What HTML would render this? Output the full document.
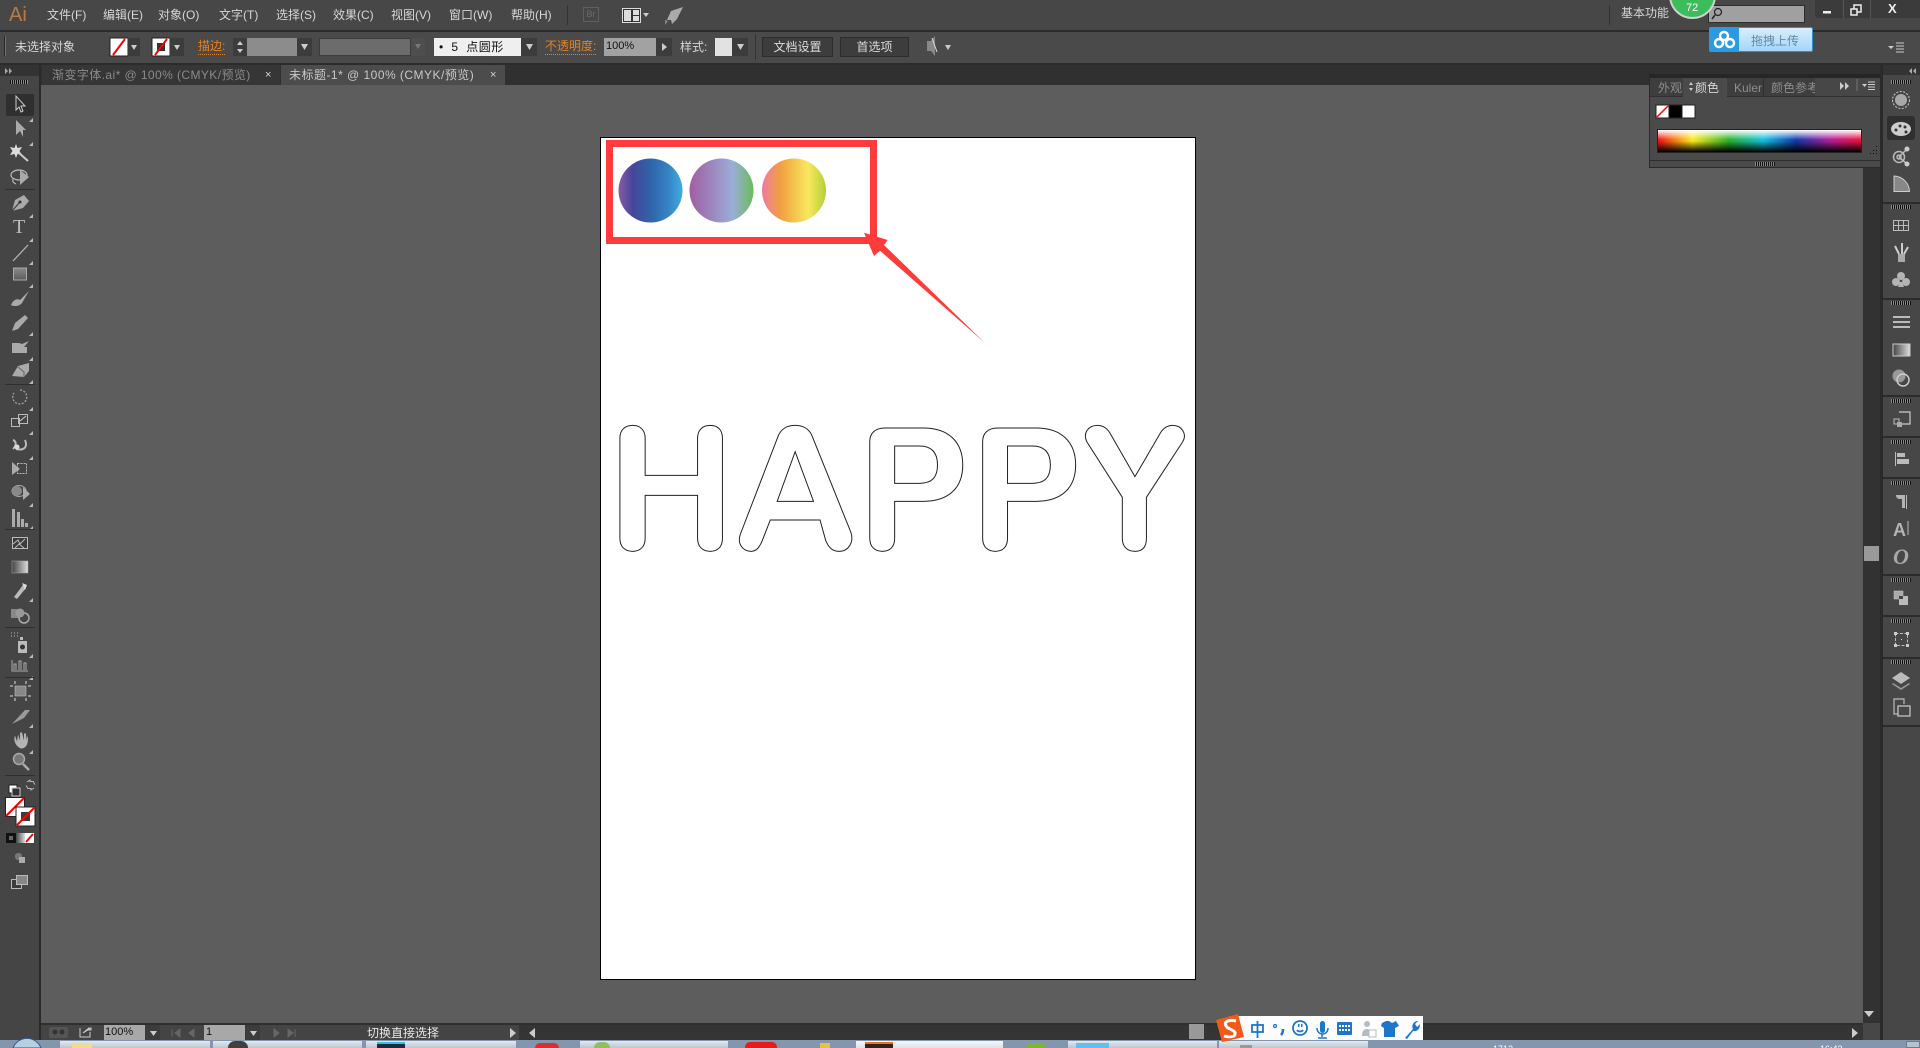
<!DOCTYPE html>
<html><head><meta charset="utf-8"><title>Ai</title>
<style>
html,body{margin:0;padding:0;background:#5d5d5d}
#p{position:relative;width:1920px;height:1048px;overflow:hidden;background:#5d5d5d;font:12px "Liberation Sans","WenQuanYi Zen Hei","Noto Sans CJK SC",sans-serif}
.b{position:absolute}
.t{position:absolute;white-space:nowrap;color:#d6d6d6;line-height:16px;font-size:12px}
.o{color:#e8821e;border-bottom:1px dotted #e8821e;line-height:15px}
svg{position:absolute;left:0;top:0}
</style></head><body><div id="p">
<!-- bars -->
<div class="b" style="left:0;top:0;width:1920px;height:30px;background:#474747"></div>
<div class="b" style="left:0;top:30px;width:1920px;height:2px;background:#2c2c2c"></div>
<div class="b" style="left:0;top:32px;width:1920px;height:31px;background:#4a4a4a"></div>
<div class="b" style="left:0;top:63px;width:1920px;height:2px;background:#2c2c2c"></div>
<div class="b" style="left:41px;top:65px;width:1842px;height:20px;background:#303030"></div>
<div class="b" style="left:0;top:65px;width:39px;height:975px;background:#454545"></div>
<div class="b" style="left:0;top:65px;width:39px;height:11px;background:#333"></div>
<div class="b" style="left:39px;top:65px;width:2px;height:975px;background:#2a2a2a"></div>
<div class="b" style="left:42px;top:65px;width:238px;height:20px;background:#363636"></div>
<div class="b" style="left:281px;top:65px;width:224px;height:20px;background:#4c4c4c"></div>
<!-- menu -->
<div class="t" style="left:9px;top:3px;font-size:20px;line-height:24px;color:#b87c44">Ai</div>
<div class="t" style="left:47px;top:7px">文件(F)</div>
<div class="t" style="left:103px;top:7px">编辑(E)</div>
<div class="t" style="left:158px;top:7px">对象(O)</div>
<div class="t" style="left:219px;top:7px">文字(T)</div>
<div class="t" style="left:276px;top:7px">选择(S)</div>
<div class="t" style="left:333px;top:7px">效果(C)</div>
<div class="t" style="left:391px;top:7px">视图(V)</div>
<div class="t" style="left:449px;top:7px">窗口(W)</div>
<div class="t" style="left:511px;top:7px">帮助(H)</div>
<div class="b" style="left:567px;top:5px;width:1px;height:20px;background:#333"></div>
<div class="b" style="left:583px;top:7px;width:14px;height:13px;border:1px solid #5f5f5f;color:#6b6b6b;font-size:9px;line-height:13px;text-align:center">Br</div>
<!-- control bar -->
<div class="t" style="left:15px;top:39px">未选择对象</div>
<div class="t o" style="left:198px;top:39px">描边:</div>
<div class="b" style="left:233px;top:38px;width:14px;height:18px;background:#3c3c3c"></div>
<div class="b" style="left:247px;top:38px;width:50px;height:18px;background:#8c8c8c"></div>
<div class="b" style="left:297px;top:38px;width:15px;height:18px;background:#3c3c3c"></div>
<div class="b" style="left:319px;top:38px;width:92px;height:18px;background:#6c6c6c;border:1px solid #3c3c3c;box-sizing:border-box"></div>
<div class="b" style="left:411px;top:38px;width:14px;height:18px;background:#4e4e4e"></div>
<div class="b" style="left:434px;top:38px;width:87px;height:18px;background:#efefef"></div>
<div class="t" style="left:439px;top:39px;color:#111;letter-spacing:.5px">•&nbsp;&nbsp;5&nbsp;&nbsp;点圆形</div>
<div class="b" style="left:521px;top:38px;width:16px;height:18px;background:#3c3c3c"></div>
<div class="t o" style="left:545px;top:39px">不透明度:</div>
<div class="b" style="left:604px;top:38px;width:52px;height:18px;background:#a2a2a2"></div>
<div class="t" style="left:606px;top:38px;color:#111;font-size:11px">100%</div>
<div class="b" style="left:656px;top:38px;width:16px;height:18px;background:#3c3c3c"></div>
<div class="t" style="left:680px;top:39px">样式:</div>
<div class="b" style="left:715px;top:38px;width:17px;height:18px;background:#e2e2e2"></div>
<div class="b" style="left:732px;top:38px;width:16px;height:18px;background:#3c3c3c"></div>
<div class="b" style="left:755px;top:34px;width:1px;height:26px;background:#333"></div>
<div class="b" style="left:762px;top:37px;width:71px;height:20px;background:#3d3d3d;border:1px solid #2c2c2c;box-sizing:border-box;color:#ddd;text-align:center;line-height:18px">文档设置</div>
<div class="b" style="left:840px;top:37px;width:69px;height:20px;background:#3d3d3d;border:1px solid #2c2c2c;box-sizing:border-box;color:#ddd;text-align:center;line-height:18px">首选项</div>
<!-- tabs -->
<div class="t" style="left:52px;top:67px;color:#8a8a8a;letter-spacing:.42px">渐变字体.ai* @ 100% (CMYK/预览)</div>
<div class="t" style="left:289px;top:67px;color:#c8c8c8;letter-spacing:.48px">未标题-1* @ 100% (CMYK/预览)</div>
<div class="t" style="left:265px;top:67px;font-size:11px">×</div>
<div class="t" style="left:490px;top:67px;font-size:11px">×</div>
<!-- top right -->
<div class="b" style="left:1609px;top:5px;width:1px;height:20px;background:#333"></div>
<div class="t" style="left:1621px;top:5px">基本功能</div>
<div class="b" style="left:1708px;top:5px;width:97px;height:18px;background:#a0a0a0;border:1px solid #2e2e2e;box-sizing:border-box"></div>
<div class="b" style="left:1669px;top:-28px;width:47px;height:47px;border-radius:50%;background:#3cbc5a;border:2px solid #cfd4cf;box-sizing:border-box"></div>
<div class="t" style="left:1686px;top:0;color:#fff;font-size:11px">72</div>
<div class="b" style="left:1815px;top:0;width:105px;height:18px;background:#3b3b3b;border-radius:0 0 0 3px"></div>
<div class="b" style="left:1843px;top:0;width:1px;height:18px;background:#555"></div>
<div class="b" style="left:1870px;top:0;width:1px;height:18px;background:#555"></div>
<div class="t" style="left:1888px;top:1px;color:#eee;font-weight:bold;font-size:13px">X</div>
<div class="b" style="left:1709px;top:27px;width:104px;height:25px;background:linear-gradient(#d8eefc,#a4d6f8);border:1px solid #2f8fd0;box-sizing:border-box;border-radius:2px"></div>
<div class="b" style="left:1709px;top:27px;width:30px;height:25px;background:#2a9ae5;border-radius:2px 0 0 2px"></div>
<div class="t" style="left:1751px;top:33px;color:#5f8aa6">拖拽上传</div>
<!-- artboard -->
<div class="b" style="left:600px;top:137px;width:596px;height:843px;background:#fff;border:1px solid #000;box-sizing:border-box"></div>
<!-- panel -->
<div class="b" style="left:1863px;top:168px;width:17px;height:855px;background:#323232"></div>
<div class="b" style="left:1864px;top:546px;width:15px;height:15px;background:#999"></div>
<div class="b" style="left:1649px;top:74px;width:233px;height:94px;background:#4a4a4a;border:1px solid #2a2a2a;box-sizing:border-box"></div>
<div class="b" style="left:1649px;top:74px;width:233px;height:4px;background:#262626"></div>
<div class="b" style="left:1650px;top:78px;width:231px;height:18px;background:#3e3e3e"></div>
<div class="b" style="left:1650px;top:96px;width:231px;height:1px;background:#2f2f2f"></div>
<div class="b" style="left:1683px;top:78px;width:44px;height:19px;background:#4a4a4a"></div>
<div class="b" style="left:1763px;top:78px;width:1px;height:18px;background:#2f2f2f"></div>
<div class="b" style="left:1815px;top:78px;width:66px;height:18px;background:#474747"></div>
<div class="t" style="left:1658px;top:80px;color:#8e8e8e">外观</div>
<div class="t" style="left:1695px;top:80px;color:#d8d8d8">颜色</div>
<div class="t" style="left:1734px;top:80px;color:#8e8e8e">Kuler</div>
<div class="t" style="left:1771px;top:80px;width:44px;overflow:hidden;color:#8e8e8e">颜色参考</div>
<div class="b" style="left:1657px;top:129px;width:205px;height:24px;border:1px solid #222;box-sizing:border-box;background:linear-gradient(#ffffff,rgba(255,255,255,0) 45%,rgba(0,0,0,0) 50%,#000),linear-gradient(90deg,#f01010,#ffe81a 17%,#28b028 35%,#10c0e0 52%,#1038a8 68%,#b01c98 85%,#f01038)"></div>
<div class="b" style="left:1650px;top:160px;width:231px;height:1px;background:#2f2f2f"></div>
<!-- right dock -->
<div class="b" style="left:1880px;top:65px;width:3px;height:975px;background:#2a2a2a"></div>
<div class="b" style="left:1883px;top:65px;width:37px;height:975px;background:#474747"></div>
<div class="b" style="left:1883px;top:65px;width:37px;height:10px;background:#333"></div>
<div class="b" style="left:1887px;top:116px;width:28px;height:24px;background:#2f2f2f;border-radius:3px"></div>
<div class="b" style="left:1883px;top:202px;width:37px;height:2px;background:#2b2b2b"></div>
<div class="b" style="left:1883px;top:298px;width:37px;height:2px;background:#2b2b2b"></div>
<div class="b" style="left:1883px;top:395px;width:37px;height:2px;background:#2b2b2b"></div>
<div class="b" style="left:1883px;top:436px;width:37px;height:2px;background:#2b2b2b"></div>
<div class="b" style="left:1883px;top:477px;width:37px;height:2px;background:#2b2b2b"></div>
<div class="b" style="left:1883px;top:574px;width:37px;height:2px;background:#2b2b2b"></div>
<div class="b" style="left:1883px;top:615px;width:37px;height:2px;background:#2b2b2b"></div>
<div class="b" style="left:1883px;top:657px;width:37px;height:2px;background:#2b2b2b"></div>
<div class="b" style="left:1883px;top:725px;width:37px;height:2px;background:#2b2b2b"></div>
<div class="t" style="left:1893px;top:521px;font:bold 18px/18px 'Liberation Sans',sans-serif;color:#b4b4b4">A</div>
<div class="t" style="left:1893px;top:546px;font:italic bold 22px/22px 'Liberation Serif',serif;color:#a8a8a8">O</div>
<!-- left tool selected -->
<div class="b" style="left:6px;top:94px;width:28px;height:22px;background:#2f2f2f;border-radius:2px"></div>
<div class="t" style="left:13px;top:217px;font:20px/20px 'Liberation Serif',serif;color:#bbb">T</div>
<!-- status -->
<div class="b" style="left:41px;top:1023px;width:1839px;height:2px;background:#2f2f2f"></div>
<div class="b" style="left:41px;top:1025px;width:478px;height:15px;background:#444"></div>
<div class="b" style="left:519px;top:1025px;width:1344px;height:15px;background:#353535"></div>
<div class="b" style="left:1863px;top:1023px;width:17px;height:17px;background:#474747"></div>
<div class="b" style="left:104px;top:1025px;width:41px;height:15px;background:#a8a8a8"></div>
<div class="t" style="left:105px;top:1024px;color:#111;font-size:11px">100%</div>
<div class="b" style="left:145px;top:1025px;width:15px;height:15px;background:#3c3c3c"></div>
<div class="b" style="left:204px;top:1025px;width:41px;height:15px;background:#a8a8a8"></div>
<div class="t" style="left:206px;top:1024px;color:#111;font-size:11px">1</div>
<div class="b" style="left:245px;top:1025px;width:15px;height:15px;background:#3c3c3c"></div>
<div class="t" style="left:367px;top:1025px;color:#e6e6e6">切换直接选择</div>
<div class="b" style="left:1189px;top:1024px;width:15px;height:15px;background:#999"></div>
<!-- taskbar -->
<div class="b" style="left:0;top:1040px;width:1920px;height:8px;background:#8396ae"></div>
<div class="b" style="left:60px;top:1041px;width:150px;height:7px;background:linear-gradient(#e4e8ec,#bcc7d2)"></div>
<div class="b" style="left:213px;top:1041px;width:149px;height:7px;background:linear-gradient(#e4e8ec,#bcc7d2)"></div>
<div class="b" style="left:366px;top:1041px;width:150px;height:7px;background:linear-gradient(#e4e8ec,#bcc7d2)"></div>
<div class="b" style="left:580px;top:1041px;width:148px;height:7px;background:linear-gradient(#e4e8ec,#bcc7d2)"></div>
<div class="b" style="left:856px;top:1041px;width:147px;height:7px;background:linear-gradient(#f4f5f6,#dde2e8)"></div>
<div class="b" style="left:1068px;top:1041px;width:149px;height:7px;background:linear-gradient(#e4e8ec,#bcc7d2)"></div>
<div class="b" style="left:1219px;top:1041px;width:149px;height:7px;background:linear-gradient(#e4e8ec,#bcc7d2)"></div>
<div class="b" style="left:72px;top:1043px;width:20px;height:5px;background:#f2dc8c"></div>
<div class="b" style="left:228px;top:1041px;width:20px;height:7px;background:#443f3c;border-radius:10px 10px 0 0"></div>
<div class="b" style="left:377px;top:1042px;width:28px;height:6px;background:#1c2c3e;border-top:2px solid #35c0e8;box-sizing:border-box"></div>
<div class="b" style="left:535px;top:1043px;width:24px;height:5px;background:#d83030;border-radius:12px 12px 0 0"></div>
<div class="b" style="left:594px;top:1042px;width:16px;height:6px;background:#8fc060;border-radius:8px 8px 0 0"></div>
<div class="b" style="left:745px;top:1042px;width:32px;height:6px;background:#e41c1c;border-radius:5px 5px 0 0"></div>
<div class="b" style="left:820px;top:1043px;width:10px;height:5px;background:#e8c23c"></div>
<div class="b" style="left:865px;top:1042px;width:28px;height:6px;background:#2c2420;border-top:2px solid #f0701c;box-sizing:border-box"></div>
<div class="b" style="left:1026px;top:1043px;width:20px;height:5px;background:#7ab82e;border-radius:10px 10px 0 0"></div>
<div class="b" style="left:1076px;top:1043px;width:33px;height:5px;background:#62c0f0"></div>
<div class="b" style="left:1240px;top:1045px;width:12px;height:3px;background:#999"></div>
<div class="b" style="left:1906px;top:1041px;width:14px;height:7px;background:#b7c2ce;border:1px solid #6d7c8d;box-sizing:border-box"></div>
<div class="t" style="left:1493px;top:1044px;color:#fff;font-size:9px;line-height:10px">1712</div>
<div class="t" style="left:1820px;top:1044px;color:#fff;font-size:9px;line-height:10px">16:43</div>
<!-- sogou -->
<div class="b" style="left:1230px;top:1016px;width:193px;height:24px;background:#fdfdfd"></div>
<svg width="1920" height="1048" viewBox="0 0 1920 1048" xmlns="http://www.w3.org/2000/svg">
<defs>
<linearGradient id="c1"><stop offset="0" stop-color="#8c5aa2"/><stop offset=".22" stop-color="#46459a"/><stop offset=".52" stop-color="#2f66ab"/><stop offset=".78" stop-color="#3584c4"/><stop offset="1" stop-color="#40ace2"/></linearGradient>
<linearGradient id="c2"><stop offset="0" stop-color="#a05ea2"/><stop offset=".68" stop-color="#9aaed8"/><stop offset="1" stop-color="#68bc58"/></linearGradient>
<linearGradient id="c3"><stop offset="0" stop-color="#ee7aa2"/><stop offset=".3" stop-color="#f0a23e"/><stop offset=".72" stop-color="#f9e85e"/><stop offset="1" stop-color="#b4d034"/></linearGradient>
<linearGradient id="g1" x1="0" y1="0" x2="0" y2="1"><stop offset="0" stop-color="#8a8a8a"/><stop offset="1" stop-color="#5c5c5c"/></linearGradient>
<linearGradient id="g2"><stop offset="0" stop-color="#444"/><stop offset="1" stop-color="#ddd"/></linearGradient>
<pattern id="grip" width="2" height="4" patternUnits="userSpaceOnUse"><rect width="1" height="4" fill="#111"/><rect x="1" width="1" height="4" fill="#888"/></pattern>
</defs>
<!-- artwork -->
<circle cx="650.500" cy="190.500" r="32" fill="url(#c1)"/>
<circle cx="721.500" cy="190.500" r="32" fill="url(#c2)"/>
<circle cx="794" cy="190.500" r="32" fill="url(#c3)"/>
<rect x="609.500" y="143.500" width="264" height="97" fill="none" stroke="#ff3b3b" stroke-width="7"/>
<path d="M864 232.700L887.700 240L884 245L985 343L880 250.700L874 256Z" fill="#ff3b3b"/>
<g transform="translate(600,410) scale(.38265,.33333)" fill="#fff" fill-rule="evenodd" stroke="#222" stroke-width="1">
<path vector-effect="non-scaling-stroke" d="M52 85C52 60 65 46 85 46C105 46 118 60 118 85L118 196L255 196L255 85C255 60 268 46 288 46C308 46 320 60 320 85L320 385C320 410 308 424 288 424C268 424 255 410 255 385L255 256L118 256L118 385C118 410 105 424 85 424C65 424 52 410 52 385Z"/>
<path vector-effect="non-scaling-stroke" d="M465 80C472 58 488 46 510 46C532 46 548 58 555 80L655 365C665 395 650 424 625 424C605 424 597 410 590 392L575 330L445 330L424 392C417 410 410 424 395 424C372 424 358 400 367 372ZM510 125L558 274L463 274Z"/>
<path vector-effect="non-scaling-stroke" d="M705 95C705 70 718 54 745 54L845 54C910 54 948 95 948 165C948 235 910 274 845 274L770 274L770 385C770 410 758 424 738 424C718 424 705 410 705 385ZM770 108L835 108C865 108 882 125 882 165C882 205 865 220 835 220L770 220Z"/>
<path vector-effect="non-scaling-stroke" d="M1000 95C1000 70 1013 54 1040 54L1140 54C1205 54 1243 95 1243 165C1243 235 1205 274 1140 274L1065 274L1065 385C1065 410 1053 424 1033 424C1013 424 1000 410 1000 385ZM1065 108L1130 108C1160 108 1177 125 1177 165C1177 205 1160 220 1130 220L1065 220Z"/>
<path vector-effect="non-scaling-stroke" d="M1272 95C1262 70 1275 46 1300 46C1315 46 1325 55 1332 68L1398 200L1465 68C1472 55 1482 46 1497 46C1520 46 1535 72 1523 95L1428 262L1428 385C1428 410 1418 424 1398 424C1378 424 1365 410 1365 385L1365 262Z"/>
</g>
<!-- top chrome icons -->
<rect x="622.500" y="8.500" width="18" height="14" fill="#333" stroke="#ddd"/><rect x="624" y="10" width="7" height="11" fill="#ddd"/><rect x="633" y="10" width="6" height="5" fill="#ddd"/><rect x="633" y="16" width="6" height="5" fill="#ddd"/>
<path d="M643 13h6l-3 4z" fill="#ccc"/>
<path d="M683 7L671 11L667 20L671 20L672 24L677 19Z" fill="#aaa"/><path d="M665 20l3 1-3 4z" fill="#888"/>
<rect x="4" y="36" width="2" height="20" fill="url(#grip)" opacity=".6"/>
<rect x="110" y="38" width="18" height="18" fill="#fff" stroke="#222"/><path d="M113 55L125 39" stroke="#f00" stroke-width="2"/>
<rect x="128" y="38" width="12" height="18" fill="#3c3c3c"/><path d="M131 45h6l-3 5z" fill="#ccc"/>
<rect x="152" y="38" width="18" height="18" fill="#fff" stroke="#222"/><rect x="157" y="43" width="8" height="8" fill="#333"/><path d="M155 55L167 39" stroke="#f00" stroke-width="2"/>
<rect x="170" y="38" width="14" height="18" fill="#3c3c3c"/><path d="M174 45h6l-3 5z" fill="#ccc"/>
<path d="M237 45l3-4 3 4zM237 49l3 4 3-4z" fill="#ccc"/>
<path d="M301 44h7l-3.500 6z" fill="#ccc"/><path d="M415 44h6l-3 5z" fill="#777"/><path d="M526 44h7l-3.500 6z" fill="#ccc"/>
<path d="M662 43l5 4-5 4z" fill="#ccc"/><path d="M737 44h7l-3.500 6z" fill="#ccc"/>
<path d="M927 41h4l4-5v20l-4-5h-4z" fill="#888"/><path d="M932 38l5 14" stroke="#ddd"/><path d="M945 45h6l-3 5z" fill="#ccc"/>
<circle cx="1718" cy="12" r="3.500" fill="none" stroke="#222" stroke-width="1.200"/><path d="M1715 15l-3 4" stroke="#222" stroke-width="1.500"/>
<rect x="1823" y="11" width="8" height="2.500" fill="#eee"/>
<rect x="1854" y="5" width="7" height="7" fill="none" stroke="#eee" stroke-width="1.500"/><rect x="1851" y="9" width="6" height="6" fill="#3b3b3b" stroke="#eee" stroke-width="1.500"/>
<g fill="none" stroke="#fff" stroke-width="2.500"><circle cx="1724" cy="36" r="4"/><circle cx="1719" cy="43" r="4"/><circle cx="1730" cy="43" r="4"/></g>
<path d="M1888 46l3 3 3-3z" fill="#ccc"/><path d="M1896 43h8M1896 46h8M1896 49h8M1896 52h8" stroke="#ccc"/>
<!-- collapsed headers -->
<path d="M5 68l3 3-3 3zM9 68l3 3-3 3z" fill="#aaa"/>
<path d="M1912 68l-3 3 3 3zM1916 68l-3 3 3 3z" fill="#aaa"/>
<rect x="10" y="80" width="18" height="4" fill="url(#grip)"/>
<!-- panel icons -->
<path d="M1689 85l2-3 2 3zM1689 88l2 3 2-3z" fill="#ccc"/>
<path d="M1840 82l4 4-4 4zM1845 82l4 4-4 4z" fill="#ccc"/><path d="M1857 79v12" stroke="#777"/>
<path d="M1862 84h5l-2.500 3z" fill="#ccc"/><path d="M1868 82h7M1868 84.500h7M1868 87h7M1868 89.500h7" stroke="#ccc"/>
<rect x="1656" y="105" width="13" height="13" fill="#fff" stroke="#222"/><path d="M1657 117L1668 106" stroke="#f00" stroke-width="1.500"/>
<rect x="1669" y="105" width="13" height="13" fill="#000" stroke="#222"/><rect x="1682" y="105" width="13" height="13" fill="#fff" stroke="#222"/>
<g fill="#111"><rect x="1876" y="146" width="1" height="1"/><rect x="1873" y="150" width="1" height="1"/><rect x="1876" y="150" width="1" height="1"/><rect x="1870" y="153" width="1" height="1"/><rect x="1873" y="153" width="1" height="1"/><rect x="1876" y="153" width="1" height="1"/></g>
<rect x="1755" y="162" width="20" height="4" fill="url(#grip)"/>
<!-- right dock grips -->
<g fill="url(#grip)"><rect x="1891" y="80" width="20" height="4"/><rect x="1891" y="205" width="20" height="4"/><rect x="1891" y="301" width="20" height="4"/><rect x="1891" y="399" width="20" height="4"/><rect x="1891" y="440" width="20" height="4"/><rect x="1891" y="481" width="20" height="4"/><rect x="1891" y="578" width="20" height="4"/><rect x="1891" y="619" width="20" height="4"/><rect x="1891" y="660" width="20" height="4"/></g>
<!-- right dock icons -->
<circle cx="1901" cy="100" r="8.500" fill="none" stroke="#ccc" stroke-dasharray="2 1.500"/><circle cx="1901" cy="100" r="6" fill="#a8a8a8"/>
<ellipse cx="1901" cy="129" rx="10" ry="7" fill="#ccc"/><g fill="#333"><circle cx="1896" cy="130" r="1.500"/><circle cx="1900" cy="126" r="1.500"/><circle cx="1905" cy="127" r="1.500"/><circle cx="1906" cy="132" r="1.500"/></g>
<g fill="none" stroke="#bbb" stroke-width="1.500"><circle cx="1899" cy="157" r="5.500"/><circle cx="1899" cy="157" r="2"/><path d="M1899 157L1907 149M1899 157L1907 164"/></g><circle cx="1907" cy="149" r="2.500" fill="#ccc"/><circle cx="1907" cy="164" r="2.500" fill="#ccc"/>
<path d="M1894 176a16 16 0 0 1 15.500 15.500h-15.500z" fill="#888" stroke="#ccc"/>
<g fill="none" stroke="#bbb"><rect x="1893.500" y="220.500" width="15" height="10"/><path d="M1898.500 220.500v10M1903.500 220.500v10M1893.500 225.500h15"/></g>
<rect x="1898" y="254" width="7" height="8" fill="#aaa"/><path d="M1899 254L1895 246M1902 254V243M1904 254L1908 247" stroke="#ccc" stroke-width="2"/>
<g fill="#b4b4b4"><circle cx="1901" cy="276" r="4"/><circle cx="1896" cy="282" r="4"/><circle cx="1906" cy="282" r="4"/><path d="M1900 282h2l2 5h-6z"/></g>
<path d="M1893 317h17M1893 322h17M1893 327h17" stroke="#bbb" stroke-width="2"/>
<rect x="1893" y="344" width="17" height="12" fill="url(#g2)" stroke="#ccc"/>
<circle cx="1899" cy="376" r="6.500" fill="#999"/><circle cx="1903" cy="380" r="6" fill="none" stroke="#ccc" stroke-width="1.500"/>
<path d="M1899 412h11v12h-10" fill="none" stroke="#ccc" stroke-width="1.200"/><rect x="1894" y="419" width="5" height="5" fill="none" stroke="#bbb"/><rect x="1897" y="422" width="5" height="5" fill="#aaa"/>
<path d="M1895.500 452v14" stroke="#bbb"/><rect x="1897" y="453" width="8" height="4" fill="#bbb"/><rect x="1897" y="459" width="12" height="5" fill="#bbb"/>
<path d="M1896 495h9v13h-3v-9h-3a4 4 0 0 1-3-4z" fill="#b4b4b4"/><path d="M1906.500 495v14" stroke="#bbb"/>
<path d="M1908 521v14" stroke="#bbb"/>
<rect x="1894" y="591" width="9" height="8" fill="#aaa" stroke="#ccc" stroke-width=".5"/><rect x="1899" y="596" width="9" height="9" fill="#bbb"/><rect x="1899" y="596" width="4" height="3" fill="#444"/>
<rect x="1895.500" y="633.500" width="12" height="12" fill="none" stroke="#bbb" stroke-dasharray="3 1.500"/><g fill="#ccc"><rect x="1894" y="632" width="3" height="3"/><rect x="1906" y="632" width="3" height="3"/><rect x="1894" y="644" width="3" height="3"/><rect x="1906" y="644" width="3" height="3"/></g><rect x="1901" y="639" width="1" height="1" fill="#ddd"/>
<path d="M1901 672l9 6-9 6-9-6z" fill="#bbb"/><path d="M1893 683l8 5 8-5 1 1-9 6-9-6z" fill="#999"/>
<path d="M1904 704v-5h-10v15h4" fill="none" stroke="#bbb" stroke-width="1.200"/><rect x="1898" y="706" width="12" height="10" fill="none" stroke="#ccc" stroke-width="1.200"/>
<path d="M1864 1011h10l-5 6z" fill="#ccc"/>
<!-- tools -->
<g fill="#aaa" stroke="none">
<path d="M16 96V110L19 107L21 112L23 111L21 106H25Z" fill="none" stroke="#ccc"/>
<path d="M16 120V135L20 131L23 137V130H26Z"/>
<path d="M16 144L17.500 148L22 147L19.500 151L22 155L17.500 154L16 158L14.500 154L10 155L12.500 151L10 147L14.500 148Z" fill="#ddd"/><path d="M19 153L28 161" stroke="#ccc" stroke-width="2"/>
<ellipse cx="19" cy="175" rx="8" ry="5" fill="none" stroke="#bbb" stroke-width="1.200"/><path d="M13 179c-1 3 1 4 3 5" fill="none" stroke="#bbb"/><path d="M20 170L29 177L20 185Z"/>
<path d="M12 211L15 200L24 195L29 201L23 208Z"/><path d="M12 211L20 202" stroke="#333"/><circle cx="20" cy="202" r="1.500" fill="#333"/>
<path d="M13 261L28 245" stroke="#bbb" stroke-width="1.200"/>
<rect x="13.500" y="268" width="13" height="12" fill="url(#g1)" stroke="#aaa"/>
<path d="M11 305C13 300 17 298 20 300L29 291L22 303C20 306 14 307 11 305Z"/>
<path d="M12 331L15 323L25 315L28 318L18 329Z"/>
<path d="M12 347H24L29 341L22 344L19 343H12V353H27V347"/>
<path d="M12 376L18 366L29 363L29 371L24 377Z"/><path d="M18 367L24 372L24 377" stroke="#666" fill="none"/>
<path d="M20 390a7 7 0 1 1-6 3" fill="none" stroke="#aaa" stroke-width="1.200" stroke-dasharray="2 1.500"/>
<g fill="none" stroke="#bbb"><rect x="11.500" y="418.500" width="8" height="8"/><rect x="18.500" y="414.500" width="9" height="9"/></g><path d="M20 421l6-5" stroke="#ccc"/>
<path d="M13 449C17 445 16 441 13 440M16 449C24 451 28 447 25 440" fill="none" stroke="#bbb" stroke-width="2"/><circle cx="17" cy="447" r="2.500" fill="#ddd"/>
<path d="M12 462L20 469L12 475Z"/><rect x="17.500" y="463.500" width="9" height="10" fill="none" stroke="#bbb" stroke-dasharray="2 1"/>
<ellipse cx="19" cy="491" rx="7" ry="5.500" fill="none" stroke="#aaa"/><circle cx="17" cy="491" r="5" fill="#888"/><path d="M23 487L30 494L23 500Z"/>
<path d="M12 509h3v18h-3zM17 512h3v15h-3zM21 519h3v8h-3zM25 523h3v4h-3z"/>
<rect x="12.500" y="537.500" width="15" height="11" fill="#3c3c3c" stroke="#bbb"/><path d="M13 544L18 540L20 544L25 539M15 548L19 544L24 548" stroke="#bbb" fill="none"/>
<rect x="12" y="561" width="16" height="12" fill="url(#g2)" stroke="#aaa" stroke-width=".5"/>
<path d="M14 597L23 585L26 588L17 599Z" fill="#bbb"/><path d="M22 583L27 585L25 590Z" fill="#ddd"/>
<rect x="11" y="609" width="9" height="9" fill="#888"/><circle cx="24" cy="618" r="5" fill="none" stroke="#aaa" stroke-width="1.500"/><circle cx="20" cy="613" r="4.500" fill="#999"/>
<g transform="translate(0,-3)"><g fill="#bbb"><rect x="20" y="640" width="3" height="3"/><rect x="18" y="644" width="9" height="12"/></g><circle cx="22.500" cy="650" r="2.500" fill="#333"/><path d="M11 636h1M14 636h1M17 636h1M11 639h1M14 639h1M17 639h1" stroke="#bbb"/></g>
<path d="M12 660V671H28M14 670v-6h2v6M19 670v-9h2v9M24 670v-7h2v7" fill="none" stroke="#aaa"/>
<rect x="15" y="686" width="11" height="10" fill="#888" stroke="#bbb" stroke-width=".6"/><path d="M10 686h3M15 681v3M26 681v3M28 686h3M10 696h3M28 696h3M15 698v3M26 698v3" stroke="#ddd"/>
<path d="M12 724L25 710L30 710L24 718Z" fill="#9a9a9a"/>
<g transform="translate(0,2.500)"><path d="M15 733C13 738 16 744 21 746C26 746 28 742 28 736L27 733L26 738V731H24V738L22 730H20V738L18 732L17 739Z" fill="#b4b4b4"/></g>
<g transform="translate(0,2)"><circle cx="19" cy="757" r="5.500" fill="#777" stroke="#aaa" stroke-width="1.500"/><path d="M23 762l6 6" stroke="#aaa" stroke-width="2.500"/></g>
</g>
<g fill="#bbb"><path d="M33 118v4h-4zM33 142v4h-4zM33 214v4h-4zM33 238v4h-4zM33 261v4h-4zM33 284v4h-4zM33 332v4h-4zM33 357v4h-4zM33 380v4h-4zM33 407v4h-4zM33 431v4h-4zM33 456v4h-4zM33 503v4h-4zM33 526v4h-4zM33 598v4h-4zM33 654v4h-4zM33 676v4h-4zM33 724v4h-4zM33 750v4h-4z"/></g>
<g stroke="#2f2f2f"><path d="M5 189.500H35M5 384.500H35M5 529.500H35M5 627.500H35M5 677.500H35M5 775.500H35"/></g>
<rect x="9" y="785" width="8" height="8" fill="#fff" stroke="#222"/><rect x="12" y="788" width="8" height="8" fill="#333" stroke="#ccc"/>
<path d="M27 782l3-2v1.500h3l2 3M34 788l-3 2v-1.500h-3l-2-3" fill="none" stroke="#bbb"/>
<rect x="5.500" y="797.500" width="19" height="19" fill="#fff" stroke="#222"/><path d="M6 816L24 798" stroke="#f00" stroke-width="2"/>
<rect x="16" y="807" width="19" height="19" fill="#fff" stroke="#222"/><rect x="21" y="812" width="9" height="9" fill="#3a3a3a"/><path d="M17 825L34 808" stroke="#f00" stroke-width="2"/>
<rect x="6" y="833" width="10" height="10" fill="#111"/><rect x="9" y="836" width="4" height="4" fill="#666"/><rect x="16" y="833" width="9" height="10" fill="url(#g2)"/><rect x="25" y="833" width="9" height="10" fill="#fff"/><path d="M26 842L33 834" stroke="#f00" stroke-width="2"/>
<rect x="15" y="853" width="7" height="7" rx="3" fill="#777"/><rect x="19" y="857" width="6" height="6" fill="#aaa"/>
<rect x="11.500" y="879.500" width="10" height="9" fill="#3c3c3c" stroke="#bbb"/><rect x="16.500" y="875.500" width="11" height="9" fill="#888" stroke="#bbb"/>
<!-- status icons -->
<rect x="49" y="1027" width="19" height="11" rx="2" fill="#555"/><circle cx="55" cy="1032" r="2.500" fill="#333"/><circle cx="62" cy="1032" r="2.500" fill="#333"/>
<path d="M80 1028v9h10v-5M83 1033l6-5v2h2v-2z" fill="none" stroke="#ccc"/>
<path d="M150 1031h7l-3.500 5zM250 1031h7l-3.500 5z" fill="#ccc"/>
<path d="M172 1029v8M180 1029l-5 4 5 4zM194 1029l-5 4 5 4zM274 1029l5 4-5 4zM288 1029l5 4-5 4zM295 1029v8" fill="#666" stroke="#666"/>
<path d="M510 1028l6 5-6 5zM535 1028l-6 5 6 5zM1852 1028l6 5-6 5z" fill="#ccc"/>
<!-- sogou bar -->
<path d="M1216 1020L1238 1014L1244 1037L1222 1042Z" fill="#f05a1a"/>
<path d="M1236 1021C1227 1019 1222 1023 1228 1028C1234 1031 1237 1032 1234 1036C1231 1037 1227 1037 1224 1036" fill="none" stroke="#fff" stroke-width="3"/>
<g fill="none" stroke="#1d76c8" stroke-width="1.800"><rect x="1252" y="1025" width="11" height="7"/><path d="M1257.500 1021v17"/><circle cx="1275" cy="1026" r="1.500" stroke-width="1.300"/><path d="M1283 1029c0 3-1 5-2 6" stroke-width="2.500"/>
<circle cx="1300" cy="1028" r="7"/><path d="M1297 1030c1 2 5 2 6 0"/></g>
<g fill="#1d76c8"><rect x="1298" y="1024" width="1.500" height="3"/><rect x="1301" y="1024" width="1.500" height="3"/><rect x="1320" y="1021" width="5" height="12" rx="2.500"/><path d="M1317 1028c0 8 11 8 11 0M1322 1034v3M1318 1038h9" fill="none" stroke="#1d76c8" stroke-width="1.500"/>
<rect x="1337" y="1022" width="15" height="13" rx="1"/></g>
<g fill="#fff"><rect x="1339" y="1025" width="2" height="2"/><rect x="1342" y="1025" width="2" height="2"/><rect x="1345" y="1025" width="2" height="2"/><rect x="1348" y="1025" width="2" height="2"/><rect x="1339" y="1029" width="2" height="2"/><rect x="1342" y="1029" width="2" height="2"/><rect x="1345" y="1029" width="2" height="2"/><rect x="1348" y="1029" width="2" height="2"/></g>
<circle cx="1367" cy="1024" r="3" fill="#b4bcc4"/><path d="M1362 1036c0-5 2-7 5-7s5 2 5 7z" fill="#b4bcc4"/><rect x="1369" y="1030" width="7" height="7" fill="#fff" stroke="#b4bcc4"/>
<path d="M1382 1023l4-2h3l3 2 4-2 3 5-4 2v9h-11v-9l-3-2z" fill="#1d76c8"/>
<path d="M1405 1038l8-9c-2-4 1-8 5-8l-3 3 2 3 3-3c0 5-3 8-7 7l-6 8z" fill="#1d76c8"/>
<!-- start orb -->
<path d="M13 1048a15 15 0 0 1 28 0z" fill="#b8cfe0" stroke="#2d5a86" stroke-width="1"/>
</svg>
</div></body></html>
